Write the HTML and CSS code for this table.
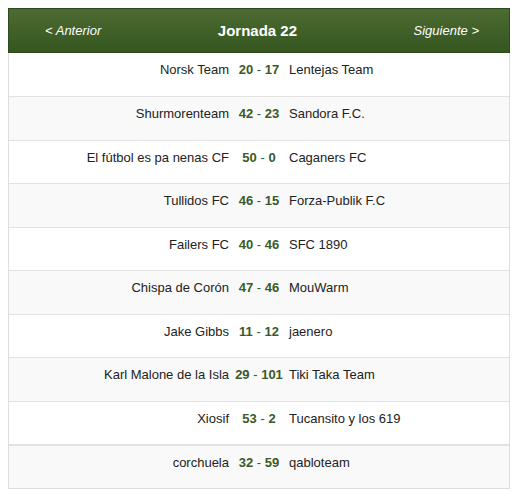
FILE: index.html
```html
<!DOCTYPE html>
<html lang="es">
<head>
<meta charset="utf-8">
<title>Jornada 22</title>
<link rel="stylesheet" href="styles.css">
</head>
<body>
<div class="board">
  <div class="head">
    <span class="nav">&lt; Anterior</span>
    <span class="title">Jornada 22</span>
    <span class="nav">Siguiente &gt;</span>
  </div>
  <div class="row"><span class="home">Norsk Team</span><span class="score"><b>20</b> - <b>17</b></span><span class="away">Lentejas Team</span></div>
  <div class="row"><span class="home">Shurmorenteam</span><span class="score"><b>42</b> - <b>23</b></span><span class="away">Sandora F.C.</span></div>
  <div class="row"><span class="home">El fútbol es pa nenas CF</span><span class="score"><b>50</b> - <b>0</b></span><span class="away">Caganers FC</span></div>
  <div class="row"><span class="home">Tullidos FC</span><span class="score"><b>46</b> - <b>15</b></span><span class="away">Forza-Publik F.C</span></div>
  <div class="row"><span class="home">Failers FC</span><span class="score"><b>40</b> - <b>46</b></span><span class="away">SFC 1890</span></div>
  <div class="row"><span class="home">Chispa de Corón</span><span class="score"><b>47</b> - <b>46</b></span><span class="away">MouWarm</span></div>
  <div class="row"><span class="home">Jake Gibbs</span><span class="score"><b>11</b> - <b>12</b></span><span class="away">jaenero</span></div>
  <div class="row"><span class="home">Karl Malone de la Isla</span><span class="score"><b>29</b> - <b>101</b></span><span class="away">Tiki Taka Team</span></div>
  <div class="row"><span class="home">Xiosif</span><span class="score"><b>53</b> - <b>2</b></span><span class="away">Tucansito y los 619</span></div>
  <div class="row last"><span class="home">corchuela</span><span class="score"><b>32</b> - <b>59</b></span><span class="away">qabloteam</span></div>
</div>
</body>
</html>
```
FILE: styles.css
```css
html, body {
  margin: 0;
  padding: 0;
  background: #fff;
}
body {
  padding: 8px 4px 0 8px;
  font-family: "Liberation Sans", Arial, sans-serif;
  font-size: 13px;
  color: #222;
}
.board {
  width: 502px;
  box-sizing: border-box;
  border: 1px solid #dedede;
  border-top: none;
}
.head {
  height: 45px;
  box-sizing: border-box;
  margin: 0 -1px;
  border: 1px solid #2f4a1e;
  background: linear-gradient(to bottom, #4b6b31, #365620);
  color: #fff;
  display: flex;
  align-items: center;
  justify-content: space-between;
  padding: 0 30px 0 36px;
}
.nav {
  font-style: italic;
  font-size: 13px;
}
.title {
  font-weight: bold;
  font-size: 15px;
}
.row {
  display: grid;
  grid-template-columns: 224px 52px 1fr;
  height: 43.5px;
  box-sizing: border-box;
  border-top: 1px solid #e2e2e2;
  padding-top: 8px;
  line-height: 18px;
}
.head + .row {
  border-top: none;
  height: 43px;
}
.row:nth-child(odd) {
  background: #f9f9f9;
}
.row.last {
  border-top: 2px solid #e2e2e2;
}
.home {
  text-align: right;
  padding-right: 4px;
}
.score {
  text-align: center;
  color: #3a5a28;
}
.away {
  text-align: left;
  padding-left: 4px;
}
```
